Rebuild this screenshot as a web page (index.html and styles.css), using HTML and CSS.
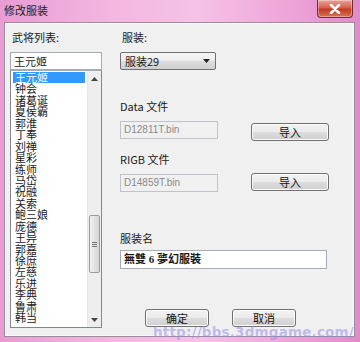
FILE: index.html
```html
<!DOCTYPE html>
<html>
<head>
<meta charset="utf-8">
<link rel="stylesheet" href="styles.css">
</head>
<body>
<div class="window">
  <div class="titlebar">
    <span class="title">修改服装</span>
    <span class="close"><svg width="12" height="10" viewBox="0 0 12 10"><path d="M2 1 L10 9 M10 1 L2 9" stroke="#fff" stroke-width="2.6" stroke-linecap="round"/></svg></span>
  </div>
  <div class="client">
    <div class="leftcol">
      <div class="label">武将列表:</div>
      <div class="edit">王元姬</div>
      <div class="listbox">
        <ul class="items">
          <li class="sel">王元姬</li>
          <li>钟会</li>
          <li>诸葛诞</li>
          <li>夏侯霸</li>
          <li>郭淮</li>
          <li>丁奉</li>
          <li>刘禅</li>
          <li>星彩</li>
          <li>练师</li>
          <li>马岱</li>
          <li>祝融</li>
          <li>关索</li>
          <li>鲍三娘</li>
          <li>庞德</li>
          <li>王异</li>
          <li>郭嘉</li>
          <li>徐庶</li>
          <li>左慈</li>
          <li>乐进</li>
          <li>李典</li>
          <li>鲁肃</li>
          <li>韩当</li>
        </ul>
        <div class="scrollbar">
          <div class="arrow"><svg width="7" height="4" viewBox="0 0 7 4"><path d="M0 4 L3.5 0 L7 4 Z" fill="#444"/></svg></div>
          <div class="track">
            <div class="thumb"><span class="grip"></span><span class="grip"></span><span class="grip"></span></div>
          </div>
          <div class="arrow"><svg width="7" height="4" viewBox="0 0 7 4"><path d="M0 0 L3.5 4 L7 0 Z" fill="#444"/></svg></div>
        </div>
      </div>
    </div>
    <div class="rightcol">
      <div class="label">服装:</div>
      <div class="select"><span>服装29</span><svg width="7" height="4" viewBox="0 0 7 4"><path d="M0 0 L3.5 4 L7 0 Z" fill="#222"/></svg></div>
      <div class="label sec1">Data 文件</div>
      <div class="filerow">
        <div class="field disabled">D12811T.bin</div>
        <button class="btn import1">导入</button>
      </div>
      <div class="label sec2">RIGB 文件</div>
      <div class="filerow">
        <div class="field disabled">D14859T.bin</div>
        <button class="btn import2">导入</button>
      </div>
      <div class="label sec3">服装名</div>
      <div class="field name">無雙 6 夢幻服裝</div>
      <div class="actions">
        <button class="btn">确定</button>
        <button class="btn">取消</button>
      </div>
    </div>
    <div class="watermark">http://bbs.3dmgame.com/</div>
  </div>
</div>
</body>
</html>
```

FILE: styles.css
```css
* { box-sizing: border-box; }
html, body { margin: 0; padding: 0; }
body {
  width: 360px;
  height: 342px;
  overflow: hidden;
  font-family: "Noto Sans CJK SC", "Liberation Sans", sans-serif;
  font-size: 11px;
  color: #1a1a1a;
}
.window {
  width: 360px;
  height: 342px;
  background: linear-gradient(90deg, #e89cd3 0%, #f3b6e0 30%, #f6c2e6 55%, #eea5d9 80%, #e08ccb 100%);
  display: flex;
  flex-direction: column;
}
.titlebar {
  height: 22px;
  display: flex;
  justify-content: space-between;
  align-items: flex-start;
  padding-left: 4px;
  padding-right: 7px;
}
.title {
  margin-top: 3px;
  font-size: 11px;
  color: #222;
  line-height: 14px;
}
.close {
  width: 36px;
  height: 18px;
  border: 1px solid #7a2a2a;
  border-top: none;
  border-radius: 0 0 4px 4px;
  background: linear-gradient(180deg, #e9a49b 0%, #d6604c 45%, #c23b22 55%, #d8735a 100%);
  display: flex;
  align-items: center;
  justify-content: center;
  box-shadow: inset 0 0 0 1px rgba(255,255,255,0.35);
}
.client {
  position: relative;
  margin: 0 5px 0 4px;
  height: 315px;
  background: #f0f0f0;
  border: 1px solid #9a8c98;
  box-shadow: inset 0 0 0 1px #fafafa;
  display: flex;
  padding: 8px 0 0 5px;
}
.leftcol {
  width: 92px;
  display: flex;
  flex-direction: column;
}
.label {
  line-height: 13px;
  height: 13px;
  padding-left: 2px;
}
.edit {
  margin-top: 8px;
  height: 18px;
  border: 1px solid #a5acb5;
  background: #fff;
  line-height: 16px;
  padding-left: 3px;
  font-size: 11px;
}
.listbox {
  height: 258px;
  border: 1px solid #828790;
  border-top-color: #a5acb5;
  background: #fff;
  display: flex;
}
.items {
  list-style: none;
  margin: 0;
  padding: 1px 2px 0 2px;
  flex: 1;
}
.items li {
  height: 11.45px;
  line-height: 11.45px;
  padding-left: 2px;
  font-size: 11px;
  white-space: nowrap;
}
.items li.sel {
  background: #3399ff;
  color: #fff;
}
.scrollbar {
  width: 14px;
  display: flex;
  flex-direction: column;
  background: #eeeeee;
  border-left: 1px solid #e6e6e6;
}
.arrow {
  height: 15px;
  display: flex;
  align-items: center;
  justify-content: center;
}
.track {
  flex: 1;
  display: flex;
  flex-direction: column;
  justify-content: flex-end;
  padding-bottom: 39px;
}
.thumb {
  height: 58px;
  margin: 0 1px;
  border: 1px solid #9b9b9b;
  border-radius: 2px;
  background: linear-gradient(90deg, #f3f3f3, #e2e2e2 50%, #d6d6d6);
  display: flex;
  flex-direction: column;
  align-items: center;
  justify-content: center;
  gap: 1px;
}
.grip {
  width: 5px;
  height: 1px;
  background: #777;
}
.rightcol {
  margin-left: 18px;
  flex: 1;
  display: flex;
  flex-direction: column;
  padding-right: 25px;
}
.select {
  margin-top: 8px;
  width: 96px;
  height: 18px;
  border: 1px solid #707070;
  border-radius: 2px;
  background: linear-gradient(180deg, #f6f6f6 0%, #ebebeb 50%, #dddddd 51%, #cfcfcf 100%);
  display: flex;
  align-items: center;
  justify-content: space-between;
  padding: 0 5px 0 4px;
}
.sec1 { margin-top: 30px; padding-left: 0; }
.sec2 { margin-top: 12px; padding-left: 0; }
.sec3 { margin-top: 40px; padding-left: 0; }
.filerow {
  margin-top: 8px;
  display: flex;
  align-items: flex-start;
  justify-content: space-between;
}
.field {
  height: 18px;
  border: 1px solid #c0c4ca;
  line-height: 16px;
  padding-left: 3px;
}
.disabled {
  width: 98px;
  background: #f0f0f0;
  color: #8a8a8a;
  font-family: "Liberation Sans", sans-serif;
  font-size: 10px;
}
.btn {
  width: 78px;
  height: 18px;
  padding: 0;
  font-family: "Noto Sans CJK SC", sans-serif;
  font-size: 11px;
  line-height: 14px;
  color: #111;
  border: 1px solid #707070;
  border-radius: 3px;
  background: linear-gradient(180deg, #f2f2f2 0%, #ebebeb 50%, #dddddd 51%, #cfcfcf 100%);
  box-shadow: inset 0 0 0 1px #fbfbfb;
}
.import1 { margin-top: 2px; }
.import2 { margin-top: -1px; }
.name {
  margin-top: 5px;
  width: 207px;
  height: 19px;
  background: #fff;
  border-color: #a5acb5;
  font-family: "Liberation Serif", "Noto Sans CJK TC", serif;
  font-weight: bold;
  font-size: 11px;
}
.actions {
  margin-top: 40px;
  display: flex;
  gap: 23px;
  padding-left: 25px;
}
.actions .btn {
  width: 64px;
}
.watermark {
  position: absolute;
  right: 0px;
  bottom: -4px;
  line-height: 16px;
  font-family: "DejaVu Sans", sans-serif;
  font-weight: bold;
  font-size: 13.5px;
  letter-spacing: 0.2px;
  color: rgba(150, 140, 230, 0.55);
}
```
